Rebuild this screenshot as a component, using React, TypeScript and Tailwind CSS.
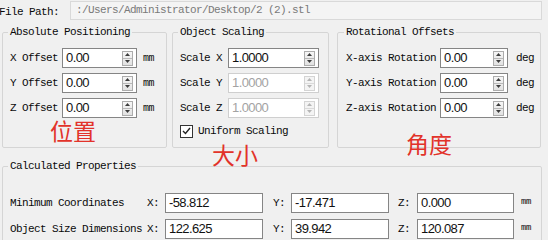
import React from "react";

const mono = "font-['Liberation_Mono','DejaVu_Sans_Mono',monospace] text-[11px] tracking-[-0.6px]";
const sans = "font-['Liberation_Sans',Arial,sans-serif]";

function SpinButton({ disabled }: { disabled?: boolean }) {
  const arrow = disabled ? "#b5b5b5" : "#3c3c3c";
  return (
    <div
      className={`ml-auto mr-[3px] flex h-[15px] w-[11px] flex-col border ${
        disabled ? "border-[#d4d4d4] bg-[#f4f4f4]" : "border-[#acacac] bg-gradient-to-b from-[#f6f6f6] to-[#e2e2e2]"
      }`}
    >
      <div className="flex flex-1 items-center justify-center">
        <svg width="5" height="3" viewBox="0 0 5 3">
          <path d="M2.5 0 L5 3 L0 3 Z" fill={arrow} />
        </svg>
      </div>
      <div className={`h-px ${disabled ? "bg-[#dadada]" : "bg-[#b8b8b8]"}`} />
      <div className="flex flex-1 items-center justify-center">
        <svg width="5" height="3" viewBox="0 0 5 3">
          <path d="M0 0 L5 0 L2.5 3 Z" fill={arrow} />
        </svg>
      </div>
    </div>
  );
}

function SpinBox({ value, width, disabled }: { value: string; width: string; disabled?: boolean }) {
  return (
    <div
      className={`flex h-[20px] items-center border bg-white pl-[3px] ${sans} text-[13px] ${width} ${
        disabled ? "border-[#cfcfcf] text-[#a3a3a3]" : "border-[#858585] text-[#111]"
      }`}
    >
      <span>{value}</span>
      <SpinButton disabled={disabled} />
    </div>
  );
}

function ReadOnlyBox({ value, width }: { value: string; width: string }) {
  return (
    <div className={`flex h-[20px] items-center border border-[#858585] bg-white pl-[3px] ${sans} text-[13px] text-[#111] ${width}`}>
      {value}
    </div>
  );
}

function Group({
  title,
  className,
  children,
}: {
  title: string;
  className: string;
  children: React.ReactNode;
}) {
  return (
    <fieldset className={`rounded-[2px] border border-[#d5d5d5] ${className}`}>
      <legend className="-ml-[2px] px-[2px] leading-[13px]">{title}</legend>
      {children}
    </fieldset>
  );
}

export default function App() {
  return (
    <div className={`relative h-[240px] w-[548px] overflow-hidden bg-[#f0f0f0] text-[#0a0a0a] ${mono}`}>
      {/* File path */}
      <div className="flex h-[20px] items-center">
        <span className="-ml-[1px] w-[71px] pt-[4px]">File Path:</span>
        <div className="mr-[6px] flex h-[19px] flex-1 items-center border border-[#d9d9d9] bg-[#f4f4f4] pl-[5px] text-[#7a7a7a]">
          :/Users/Administrator/Desktop/2 (2).stl
        </div>
      </div>

      {/* Top groups */}
      <div className="mt-[6px] flex">
        <Group title="Absolute Positioning" className="ml-[2px] h-[122px] w-[165px] pl-[7px]">
          <div className="mt-[9px] flex flex-col gap-[5px]">
            {["X Offset", "Y Offset", "Z Offset"].map((l) => (
              <div key={l} className="flex h-[20px] items-center">
                <span className="w-[52px]">{l}</span>
                <SpinBox value="0.00" width="w-[75px]" />
                <span className="ml-[6px] text-[10px] tracking-[-0.5px]">mm</span>
              </div>
            ))}
          </div>
        </Group>

        <Group title="Object Scaling" className="ml-[5px] h-[122px] w-[157px] pl-[7px]">
          <div className="mt-[9px] flex flex-col gap-[5px]">
            <div className="flex h-[20px] items-center">
              <span className="w-[48px]">Scale X</span>
              <SpinBox value="1.0000" width="w-[91px]" />
            </div>
            <div className="flex h-[20px] items-center">
              <span className="w-[48px]">Scale Y</span>
              <SpinBox value="1.0000" width="w-[91px]" disabled />
            </div>
            <div className="flex h-[20px] items-center">
              <span className="w-[48px]">Scale Z</span>
              <SpinBox value="1.0000" width="w-[91px]" disabled />
            </div>
          </div>
          <div className="mt-[6px] flex h-[14px] items-center">
            <div className="flex h-[13px] w-[13px] items-center justify-center border border-[#333] bg-white">
              <svg width="9" height="8" viewBox="0 0 9 8">
                <path d="M1 4 L3.5 6.5 L8 1" fill="none" stroke="#222" strokeWidth="1.4" />
              </svg>
            </div>
            <span className="ml-[5px]">Uniform Scaling</span>
          </div>
        </Group>

        <Group title="Rotational Offsets" className="ml-[8px] h-[122px] w-[204px] pl-[8px]">
          <div className="mt-[9px] flex flex-col gap-[5px]">
            {["X-axis Rotation", "Y-axis Rotation", "Z-axis Rotation"].map((l) => (
              <div key={l} className="flex h-[20px] items-center">
                <span className="w-[94px]">{l}</span>
                <SpinBox value="0.00" width="w-[68px]" />
                <span className="ml-[8px]">deg</span>
              </div>
            ))}
          </div>
        </Group>
      </div>

      {/* Calculated properties */}
      <Group title="Calculated Properties" className="ml-[2px] mt-[12px] h-[100px] w-[540px] pl-[7px]">
        <div className="mt-[20px] flex flex-col gap-[6px]">
          {[
            { l: "Minimum Coordinates", v: ["-58.812", "-17.471", "0.000"] },
            { l: "Object Size Dimensions", v: ["122.625", "39.942", "120.087"] },
          ].map((r) => (
            <div key={r.l} className="flex h-[20px] items-center">
              <span className="w-[137px]">{r.l}</span>
              <span className="w-[18px]">X:</span>
              <ReadOnlyBox value={r.v[0]} width="w-[98px]" />
              <span className="ml-[10px] w-[18px]">Y:</span>
              <ReadOnlyBox value={r.v[1]} width="w-[98px]" />
              <span className="ml-[9px] w-[19px]">Z:</span>
              <ReadOnlyBox value={r.v[2]} width="w-[97px]" />
              <span className="ml-[7px] text-[9px] tracking-[-0.5px]">mm</span>
            </div>
          ))}
        </div>
      </Group>

      {/* Red annotations */}
      <div className="pointer-events-none absolute left-[50px] top-[119px] font-['Noto_Sans_CJK_SC',sans-serif] text-[23px] leading-none tracking-normal text-[#e2332a]">
        位置
      </div>
      <div className="pointer-events-none absolute left-[212px] top-[143px] font-['Noto_Sans_CJK_SC',sans-serif] text-[23px] leading-none tracking-normal text-[#e2332a]">
        大小
      </div>
      <div className="pointer-events-none absolute left-[406px] top-[132px] font-['Noto_Sans_CJK_SC',sans-serif] text-[23px] leading-none tracking-normal text-[#e2332a]">
        角度
      </div>
    </div>
  );
}
